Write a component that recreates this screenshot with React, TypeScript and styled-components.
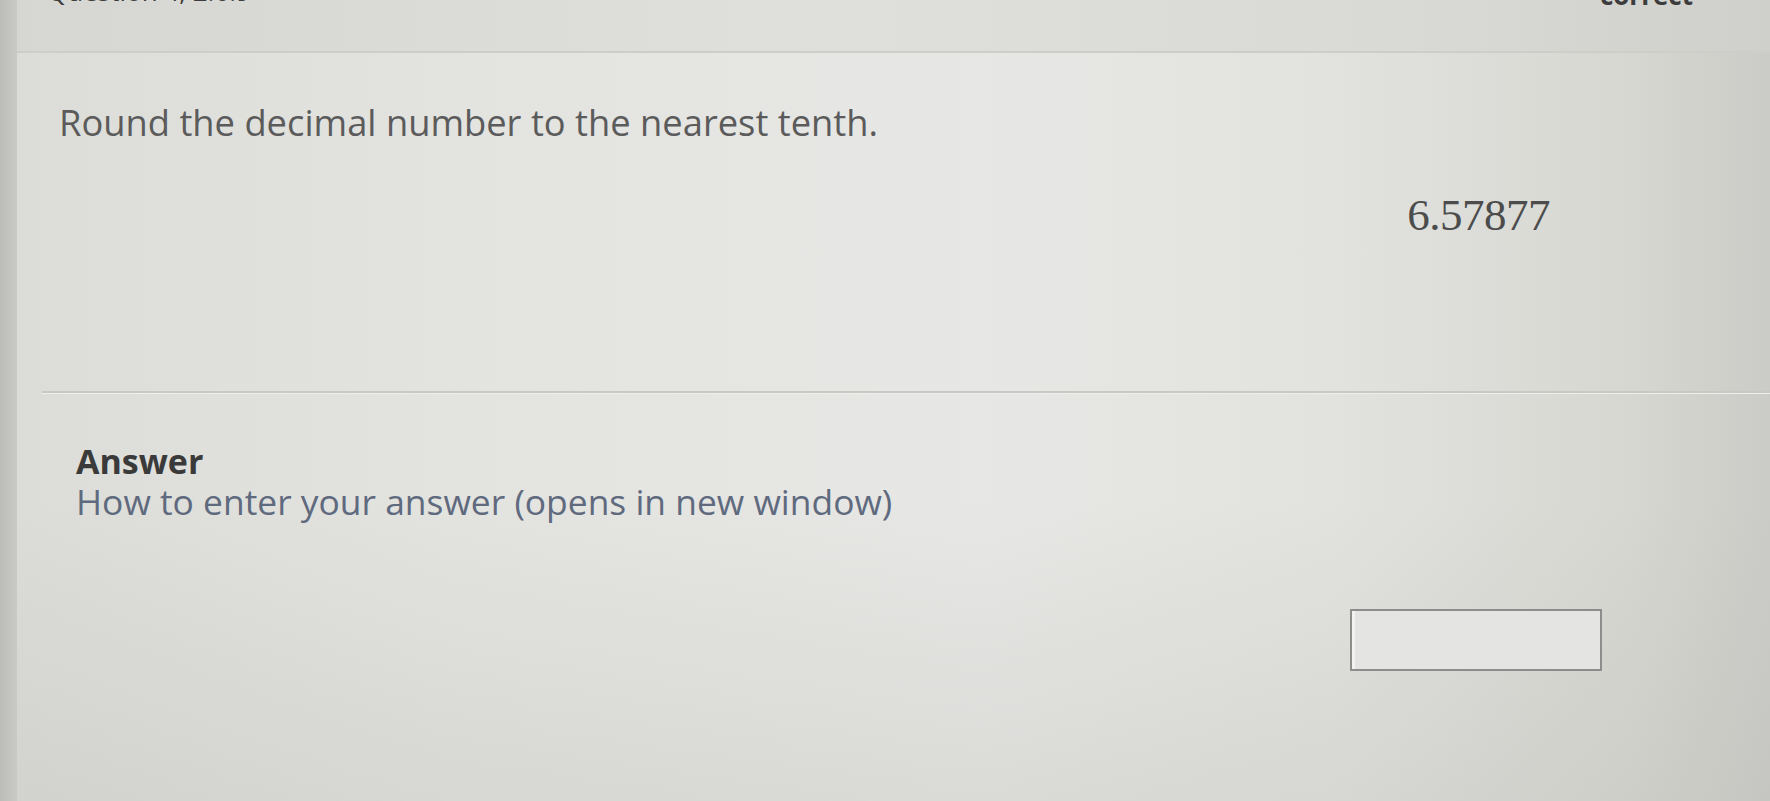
import React from "react";
import styled, { createGlobalStyle } from "styled-components";

const Global = createGlobalStyle`
  html, body {
    margin: 0;
    padding: 0;
    height: 801px;
    overflow: hidden;
    background: #cfd0cb;
  }
  #root {
    height: 801px;
  }
`;

const Page = styled.div`
  height: 801px;
  display: flex;
  flex-direction: column;
  padding-left: 17px;
  box-sizing: border-box;
  background: linear-gradient(90deg, #bcbdb8 0px, #c9cac5 17px, #d3d4cf 40px);
  font-family: "Open Sans", "Liberation Sans", sans-serif;
  overflow: hidden;
`;

const TopBar = styled.div`
  height: 51px;
  flex: none;
  overflow: hidden;
  display: flex;
  justify-content: space-between;
  align-items: flex-start;
  padding: 0 77px 0 30px;
  background: linear-gradient(90deg, #d6d7d2 0%, #dfdfdc 45%, #d9dad5 80%, #cfd0cb 100%);
`;

const TopText = styled.span<{ $bold?: boolean; $lift: number }>`
  display: block;
  margin-top: ${(p) => -p.$lift}px;
  font-size: 26px;
  line-height: 32px;
  color: #3c3c3c;
  font-weight: ${(p) => (p.$bold ? 700 : 400)};
`;

const Card = styled.div`
  flex: 1;
  display: flex;
  flex-direction: column;
  border-top: 2px solid #cdcec9;
  background:
    linear-gradient(180deg, rgba(255,255,255,0) 60%, rgba(180,180,176,0.25) 100%),
    linear-gradient(90deg, #dcddd8 0%, #e3e3e0 25%, #e7e7e5 55%, #e2e3df 75%, #d6d7d1 92%, #cbccc7 100%);
`;

const Question = styled.section`
  padding: 45px 220px 150px 42px;
  display: flex;
  flex-direction: column;
`;

const Prompt = styled.p`
  margin: 0;
  font-size: 36.3px;
  line-height: 49px;
  color: #5b5b5b;
`;

const MathRow = styled.div`
  margin-top: 42px;
  display: flex;
  justify-content: flex-end;
`;

const MathValue = styled.span`
  font-family: "Liberation Serif", "Times New Roman", serif;
  font-size: 45px;
  line-height: 52px;
  color: #4c4c4c;
  letter-spacing: -0.5px;
`;

const Divider = styled.hr`
  margin: 0 0 0 25px;
  border: none;
  height: 2px;
  background: #c8c9c4;
  box-shadow: 0 1px 0 #eeeeec;
`;

const AnswerSection = styled.section`
  padding: 49px 168px 0 59px;
  display: flex;
  flex-direction: column;
`;

const AnswerTitle = styled.h2`
  margin: 0;
  font-size: 34px;
  line-height: 38px;
  font-weight: 700;
  color: #3a3a3a;
`;

const HelpLink = styled.a`
  align-self: flex-start;
  font-size: 35.4px;
  line-height: 42px;
  color: #5f6a7e;
  text-decoration: none;
`;

const InputRow = styled.div`
  margin-top: 87px;
  display: flex;
  justify-content: flex-end;
`;

const AnswerInput = styled.input`
  width: 252px;
  height: 62px;
  box-sizing: border-box;
  border: 2px solid #8d8d8b;
  background: #e4e4e2;
  box-shadow: inset 3px 0 0 #f2f2f0;
  outline: none;
`;

export default function App() {
  return (
    <>
      <Global />
      <Page>
        <TopBar>
          <TopText $lift={25}>Question 4, 2.6.9</TopText>
          <TopText $bold $lift={21}>correct</TopText>
        </TopBar>
        <Card>
          <Question>
            <Prompt>Round the decimal number to the nearest tenth.</Prompt>
            <MathRow>
              <MathValue>6.57877</MathValue>
            </MathRow>
          </Question>
          <Divider />
          <AnswerSection>
            <AnswerTitle>Answer</AnswerTitle>
            <HelpLink href="#">How to enter your answer (opens in new window)</HelpLink>
            <InputRow>
              <AnswerInput type="text" aria-label="answer" />
            </InputRow>
          </AnswerSection>
        </Card>
      </Page>
    </>
  );
}
